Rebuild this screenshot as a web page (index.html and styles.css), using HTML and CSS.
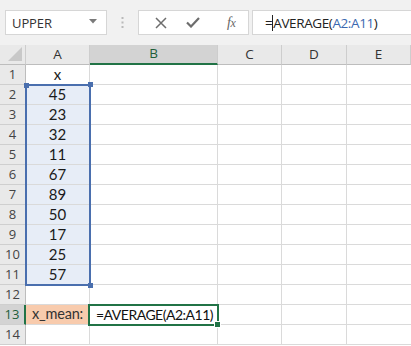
FILE: index.html
```html
<!DOCTYPE html>
<html>
<head>
<meta charset="utf-8">
<link rel="stylesheet" href="styles.css">
</head>
<body>
<div class="app">
  <div class="toolbar">
    <div class="namebox">
      <span class="nb-text">UPPER</span>
      <svg class="caret" width="8" height="5" viewBox="0 0 8 5"><path d="M0 0h8L4 4.5z" fill="#7a7a7a"/></svg>
    </div>
    <div class="dots">
      <svg width="3" height="11" viewBox="0 0 3 11"><rect x="0.5" y="0" width="2" height="2" fill="#b9b9b9"/><rect x="0.5" y="4.5" width="2" height="2" fill="#b9b9b9"/><rect x="0.5" y="9" width="2" height="2" fill="#b9b9b9"/></svg>
    </div>
    <div class="fbtns">
      <svg class="xbtn" width="12" height="12" viewBox="0 0 12 12"><path d="M1 1L11 11M11 1L1 11" stroke="#6d6d6d" stroke-width="1.5"/></svg>
      <svg class="okbtn" width="14" height="11" viewBox="0 0 14 11"><path d="M1 5.5L5 9.5L13 1" stroke="#6d6d6d" stroke-width="2.2" fill="none"/></svg>
      <span class="fx">f<i>x</i></span>
    </div>
    <div class="formula"><span class="eq">=</span><span class="cursor"></span>AVERAGE(<span class="ref">A2:A11</span>)</div>
  </div>
  <div class="sheet">
    <div class="row head">
      <div class="c rh corner"><svg width="14" height="14" viewBox="0 0 14 14"><path d="M14 0V14H0z" fill="#c8c8c8"/></svg></div>
      <div class="c ca ch">A</div>
      <div class="c cb ch act-col">B</div>
      <div class="c cc ch">C</div>
      <div class="c cd ch">D</div>
      <div class="c ce ch">E</div>
    </div>
    <div class="row"><div class="c rh">1</div><div class="c ca num">x</div><div class="c cb"></div><div class="c cc"></div><div class="c cd"></div><div class="c ce"></div></div>
    <div class="row"><div class="c rh">2</div><div class="c ca num sel">45</div><div class="c cb"></div><div class="c cc"></div><div class="c cd"></div><div class="c ce"></div></div>
    <div class="row"><div class="c rh">3</div><div class="c ca num sel">23</div><div class="c cb"></div><div class="c cc"></div><div class="c cd"></div><div class="c ce"></div></div>
    <div class="row"><div class="c rh">4</div><div class="c ca num sel">32</div><div class="c cb"></div><div class="c cc"></div><div class="c cd"></div><div class="c ce"></div></div>
    <div class="row"><div class="c rh">5</div><div class="c ca num sel">11</div><div class="c cb"></div><div class="c cc"></div><div class="c cd"></div><div class="c ce"></div></div>
    <div class="row"><div class="c rh">6</div><div class="c ca num sel">67</div><div class="c cb"></div><div class="c cc"></div><div class="c cd"></div><div class="c ce"></div></div>
    <div class="row"><div class="c rh">7</div><div class="c ca num sel">89</div><div class="c cb"></div><div class="c cc"></div><div class="c cd"></div><div class="c ce"></div></div>
    <div class="row"><div class="c rh">8</div><div class="c ca num sel">50</div><div class="c cb"></div><div class="c cc"></div><div class="c cd"></div><div class="c ce"></div></div>
    <div class="row"><div class="c rh">9</div><div class="c ca num sel">17</div><div class="c cb"></div><div class="c cc"></div><div class="c cd"></div><div class="c ce"></div></div>
    <div class="row"><div class="c rh">10</div><div class="c ca num sel">25</div><div class="c cb"></div><div class="c cc"></div><div class="c cd"></div><div class="c ce"></div></div>
    <div class="row"><div class="c rh">11</div><div class="c ca num sel">57</div><div class="c cb"></div><div class="c cc"></div><div class="c cd"></div><div class="c ce"></div></div>
    <div class="row"><div class="c rh">12</div><div class="c ca"></div><div class="c cb"></div><div class="c cc"></div><div class="c cd"></div><div class="c ce"></div></div>
    <div class="row"><div class="c rh act-row">13</div><div class="c ca num label">x_mean:</div><div class="c cb txt">=AVERAGE(A2:A11)</div><div class="c cc"></div><div class="c cd"></div><div class="c ce"></div></div>
    <div class="row"><div class="c rh">14</div><div class="c ca"></div><div class="c cb"></div><div class="c cc"></div><div class="c cd"></div><div class="c ce"></div></div>

    <div class="range-box">
      <span class="h h-tl"></span><span class="h h-tr"></span><span class="h h-br"></span>
    </div>
    <div class="active-box"><span class="fill-h"></span></div>
  </div>
</div>
</body>
</html>
```
FILE: styles.css
```css
* { box-sizing: border-box; }
html, body { margin: 0; padding: 0; }
body { width: 411px; height: 346px; overflow: hidden; background: #fff; font-family: "Open Sans", "Noto Sans", sans-serif; }

.app { width: 411px; height: 346px; display: flex; flex-direction: column; overflow: hidden; }

.toolbar {
  height: 45px; flex: none;
  background: #f1f1f1;
  display: flex; align-items: flex-start;
  padding: 10px 0 0 5px;
}
.namebox {
  width: 102px; height: 25px;
  background: #fff; border: 1px solid #d6d6d6;
  display: flex; align-items: center; justify-content: space-between;
  padding: 0 9px 0 6px;
}
.nb-text { font-size: 13px; color: #333; letter-spacing: -0.1px; }
.caret { margin-top: -2px; }
.dots { width: 31px; height: 25px; display: flex; align-items: center; justify-content: center; }
.fbtns {
  width: 111px; height: 25px;
  background: #fff; border: 1px solid #d6d6d6;
  display: flex; align-items: center;
  padding-left: 16px;
}
.xbtn { margin-right: 19px; }
.okbtn { margin-right: 27px; }
.fx { font-family: "Liberation Serif", "DejaVu Serif", serif; font-style: italic; font-size: 14px; color: #666; letter-spacing: -0.5px; }
.fx i { font-size: 12px; }
.formula {
  margin-left: 3px;
  flex: 1; height: 25px;
  background: #fff; border: 1px solid #d6d6d6; border-right: none;
  display: flex; align-items: center;
  padding-left: 12px;
  font-size: 13.5px; letter-spacing: -0.4px; color: #222;
  white-space: nowrap;
}
.cursor { display: inline-block; width: 1px; height: 16px; background: #222; margin: 0 0 0 0; }
.ref { color: #3a68b0; }

.sheet { position: relative; flex: none; }
.row { display: flex; height: 20px; }
.c {
  height: 20px; flex: none;
  border-right: 1px solid #dadada; border-bottom: 1px solid #dadada;
  font-family: "Lato", "Liberation Sans", sans-serif; font-size: 15px; color: #1a1a1a;
  display: flex; align-items: center; justify-content: center;
  line-height: 1;
  white-space: nowrap;
}
.rh { width: 26px; background: #e9e9e9; border-right: 1px solid #bdbdbd; border-bottom: 1px solid #cfcfcf; color: #444; font-family: "Open Sans", "Noto Sans", sans-serif; font-size: 13px; }
.ca { width: 64px; }
.cb { width: 128px; }
.cc { width: 64px; }
.cd { width: 65px; }
.ce { width: 64px; border-right: none; }

.head .c { background: #e9e9e9; border-right: 1px solid #cdcdcd; border-bottom: 1px solid #bdbdbd; }
.ch { color: #333; font-family: "Open Sans", "Noto Sans", sans-serif; font-size: 13.5px; }
.corner { justify-content: flex-end; align-items: flex-end; padding: 0 3px 3px 0; }
.head .act-col { background: #d3d3d3; border-bottom: 2px solid #217346; color: #1e5e3a; }
.rh.act-row { background: #d3d3d3; border-right: 2px solid #217346; color: #1e5e3a; }

.sel { background: #e7edf7; }
.label { background: #f8cbad; color: #333; font-size: 14.5px; letter-spacing: -0.2px; }
.txt { justify-content: flex-start; padding-left: 6px; color: #111; font-size: 14px; letter-spacing: -0.5px; }

.range-box {
  position: absolute; left: 25px; top: 39px; width: 66px; height: 202px;
  border: 2px solid #4a6fae;
  pointer-events: none;
}
.h { position: absolute; width: 5px; height: 5px; background: #4a6fae; }
.h-tl { left: -3px; top: -3px; }
.h-tr { right: -4px; top: -4px; }
.h-br { right: -4px; bottom: -4px; }

.active-box {
  position: absolute; left: 88px; top: 259px; width: 131px; height: 22px;
  border: 2px solid #217346;
}
.fill-h { position: absolute; right: -4px; bottom: -4px; width: 5px; height: 5px; background: #217346; border: 1px solid #fff; box-sizing: content-box; }
```
